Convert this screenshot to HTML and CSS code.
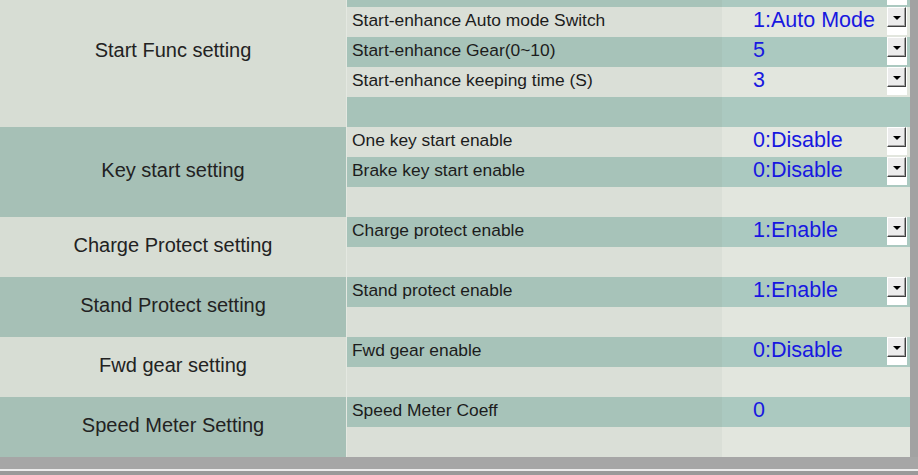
FILE: index.html
```html
<!DOCTYPE html>
<html>
<head>
<meta charset="utf-8">
<link rel="stylesheet" href="styles.css">
</head>
<body>
<div class="frame">
  <div class="table">
    <div class="group light">
      <div class="group-label">Start Func setting</div>
      <div class="rows">
        <div class="row teal"><div class="name"></div><div class="value"><span class="val"></span><div class="combo"><div class="combo-btn"><i class="tri"></i></div></div></div></div>
        <div class="row light"><div class="name">Start-enhance Auto mode Switch</div><div class="value"><span class="val">1:Auto Mode</span><div class="combo"><div class="combo-btn"><i class="tri"></i></div></div></div></div>
        <div class="row teal"><div class="name">Start-enhance Gear(0~10)</div><div class="value"><span class="val">5</span><div class="combo"><div class="combo-btn"><i class="tri"></i></div></div></div></div>
        <div class="row light"><div class="name">Start-enhance keeping time (S)</div><div class="value"><span class="val">3</span><div class="combo"><div class="combo-btn"><i class="tri"></i></div></div></div></div>
        <div class="row teal"><div class="name"></div><div class="value"></div></div>
      </div>
    </div>
    <div class="group teal">
      <div class="group-label">Key start setting</div>
      <div class="rows">
        <div class="row light"><div class="name">One key start enable</div><div class="value"><span class="val">0:Disable</span><div class="combo"><div class="combo-btn"><i class="tri"></i></div></div></div></div>
        <div class="row teal"><div class="name">Brake key start enable</div><div class="value"><span class="val">0:Disable</span><div class="combo"><div class="combo-btn"><i class="tri"></i></div></div></div></div>
        <div class="row light"><div class="name"></div><div class="value"></div></div>
      </div>
    </div>
    <div class="group light">
      <div class="group-label">Charge Protect setting</div>
      <div class="rows">
        <div class="row teal"><div class="name">Charge protect enable</div><div class="value"><span class="val">1:Enable</span><div class="combo"><div class="combo-btn"><i class="tri"></i></div></div></div></div>
        <div class="row light"><div class="name"></div><div class="value"></div></div>
      </div>
    </div>
    <div class="group teal">
      <div class="group-label">Stand Protect setting</div>
      <div class="rows">
        <div class="row teal"><div class="name">Stand protect enable</div><div class="value"><span class="val">1:Enable</span><div class="combo"><div class="combo-btn"><i class="tri"></i></div></div></div></div>
        <div class="row light"><div class="name"></div><div class="value"></div></div>
      </div>
    </div>
    <div class="group light">
      <div class="group-label">Fwd gear setting</div>
      <div class="rows">
        <div class="row teal"><div class="name">Fwd gear enable</div><div class="value"><span class="val">0:Disable</span><div class="combo"><div class="combo-btn"><i class="tri"></i></div></div></div></div>
        <div class="row light"><div class="name"></div><div class="value"></div></div>
      </div>
    </div>
    <div class="group teal">
      <div class="group-label">Speed Meter Setting</div>
      <div class="rows">
        <div class="row teal"><div class="name">Speed Meter Coeff</div><div class="value"><span class="val">0</span></div></div>
        <div class="row light"><div class="name"></div><div class="value"></div></div>
      </div>
    </div>
  </div>
  <div class="footer"></div>
</div>
</body>
</html>
```

FILE: styles.css
```css
html, body {
  margin: 0;
  padding: 0;
  height: 475px;
  overflow: hidden;
  background: #a2a2a2;
  font-family: "Liberation Sans", Arial, sans-serif;
}

.frame {
  width: 918px;
  height: 475px;
  display: flex;
  flex-direction: column;
  overflow: hidden;
}

.table {
  width: 910px;
  margin-top: -23px;
  display: flex;
  flex-direction: column;
  flex: none;
}

.group {
  display: grid;
  grid-template-columns: 346px 1fr;
  column-gap: 1px;
  background: #e4e8e1;
}

.group-label {
  display: flex;
  align-items: center;
  justify-content: center;
  font-size: 20px;
  color: #222;
  padding-bottom: 3px;
}

.group.light > .group-label { background: #d7ddd4; }
.group.teal > .group-label { background: #a6c0b6; }

.rows {
  display: flex;
  flex-direction: column;
}

.row {
  height: 30px;
  display: grid;
  grid-template-columns: 375px 1fr;
}

.row .name {
  display: flex;
  align-items: center;
  padding: 0 0 3px 5px;
  font-size: 17.4px;
  color: #1c1c1c;
  white-space: nowrap;
}

.row .value {
  display: flex;
  align-items: flex-start;
  padding: 0 3px 0 31px;
}

.row.light .name { background: #dadfd7; }
.row.light .value { background: #e2e6de; }
.row.teal .name { background: #a7c3b9; }
.row.teal .value { background: #abc9c0; }

.val {
  flex: 1;
  height: 30px;
  display: flex;
  align-items: center;
  padding-bottom: 4px;
  box-sizing: border-box;
  font-size: 21.5px;
  color: #1818e0;
  white-space: nowrap;
}

.combo {
  width: 20px;
  height: 28px;
  background: #ffffff;
  flex: none;
}

.combo-btn {
  width: 19px;
  height: 20px;
  box-sizing: border-box;
  background: #ececec;
  border-style: solid;
  border-width: 1px;
  border-color: #ffffff #404040 #404040 #ffffff;
  box-shadow: inset -1px -1px 0 #a0a0a0;
  display: flex;
  align-items: center;
  justify-content: center;
}

.tri {
  display: block;
  width: 0;
  height: 0;
  border-left: 4px solid transparent;
  border-right: 4px solid transparent;
  border-top: 4px solid #000;
  margin-top: 1px;
}

.footer {
  width: 918px;
  height: 18px;
  flex: none;
  box-sizing: border-box;
  background: #a6a6a6;
  border-bottom: 6px solid #9a9a9a;
  position: relative;
}

.footer::after {
  content: "";
  display: block;
  margin-top: 12px;
  height: 2px;
  background: #ececec;
}
```
